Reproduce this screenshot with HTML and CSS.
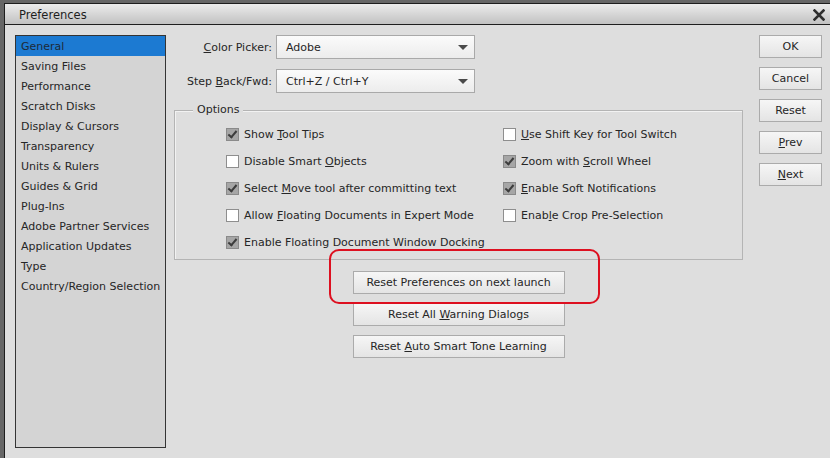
FILE: index.html
```html
<!DOCTYPE html>
<html>
<head>
<meta charset="utf-8">
<title>Preferences</title>
<link rel="stylesheet" href="styles.css">
</head>
<body>
<div class="frame">
  <div class="dialog">
    <div class="titlebar">
      <span class="title">Preferences</span>
      <svg class="close" width="12" height="12" viewBox="0 0 12 12"><path d="M1.5 1.5 L10.5 10.5 M10.5 1.5 L1.5 10.5" stroke="#2e2e2e" stroke-width="2.6" stroke-linecap="square"/></svg>
    </div>
    <div class="body">
      <ul class="cats">
        <li class="sel">General</li>
        <li>Saving Files</li>
        <li>Performance</li>
        <li>Scratch Disks</li>
        <li>Display &amp; Cursors</li>
        <li>Transparency</li>
        <li>Units &amp; Rulers</li>
        <li>Guides &amp; Grid</li>
        <li>Plug-Ins</li>
        <li>Adobe Partner Services</li>
        <li>Application Updates</li>
        <li>Type</li>
        <li>Country/Region Selection</li>
      </ul>
      <div class="main">
        <div class="fields">
          <label class="lbl"><u>C</u>olor Picker:</label>
          <div class="select"><span>Adobe</span><i class="arrow"></i></div>
          <label class="lbl">Step <u>B</u>ack/Fwd:</label>
          <div class="select"><span>Ctrl+Z / Ctrl+Y</span><i class="arrow"></i></div>
        </div>
        <div class="group">
          <span class="legend">Options</span>
          <div class="checks">
            <div class="chk"><i class="box on"></i><span>Show <u>T</u>ool Tips</span></div>
            <div class="chk"><i class="box"></i><span><u>U</u>se Shift Key for Tool Switch</span></div>
            <div class="chk"><i class="box"></i><span>Disable Smart <u>O</u>bjects</span></div>
            <div class="chk"><i class="box on"></i><span>Zoom with <u>S</u>croll Wheel</span></div>
            <div class="chk"><i class="box on"></i><span>Select <u>M</u>ove tool after committing text</span></div>
            <div class="chk"><i class="box on"></i><span><u>E</u>nable Soft Notifications</span></div>
            <div class="chk"><i class="box"></i><span>Allow <u>F</u>loating Documents in Expert Mode</span></div>
            <div class="chk"><i class="box"></i><span>Enab<u>l</u>e Crop Pre-Selection</span></div>
            <div class="chk"><i class="box on"></i><span>Enable Floating Document Window Docking</span></div>
          </div>
        </div>
        <div class="resets">
          <button class="btn wide">Reset Preferences on next launch</button>
          <button class="btn wide">Reset All <u>W</u>arning Dialogs</button>
          <button class="btn wide">Reset <u>A</u>uto Smart Tone Learning</button>
        </div>
        <div class="highlight"></div>
      </div>
      <div class="actions">
        <button class="btn side">OK</button>
        <button class="btn side">Cancel</button>
        <button class="btn side">Reset</button>
        <button class="btn side"><u>P</u>rev</button>
        <button class="btn side"><u>N</u>ext</button>
      </div>
    </div>
  </div>
</div>
</body>
</html>
```
FILE: styles.css
```css
html, body {
  margin: 0;
  padding: 0;
  width: 830px;
  height: 458px;
  overflow: hidden;
  background: #666666;
  font-family: "DejaVu Sans", sans-serif;
  font-size: 11px;
  color: #262626;
}
.frame {
  padding: 3px 0 0 4px;
  height: 455px;
}
.dialog {
  border-top: 1px solid #1e1e1e;
  border-left: 1px solid #1e1e1e;
  background: #dedede;
  height: 454px;
}
.titlebar {
  height: 20px;
  border-bottom: 1px solid #1e1e1e;
  background: linear-gradient(#ececec, #d2d2d2 60%, #c2c2c2);
  display: flex;
  align-items: center;
  justify-content: space-between;
  padding: 0 5px 0 14px;
}
.title {
  color: #1e1e1e;
  font-size: 11.5px;
  padding-top: 2px;
}
.close { display: block; margin-top: 1px; }
.body {
  display: flex;
  padding: 10px 0 0 10px;
  position: relative;
}
.cats {
  list-style: none;
  margin: 0;
  padding: 0;
  width: 149px;
  height: 411px;
  border: 1px solid #343434;
  background: #d4d4d4;
}
.cats li {
  box-sizing: border-box;
  height: 20px;
  line-height: 19px;
  padding: 1px 0 0 5px;
  white-space: nowrap;
}
.cats li.sel {
  background: #1c7ad2;
  color: #1e2a38;
}
.main {
  margin-left: 8px;
  width: 569px;
  position: relative;
}
.fields {
  display: grid;
  grid-template-columns: 98px 199px;
  column-gap: 4px;
  row-gap: 10px;
  align-items: center;
}
.lbl {
  text-align: right;
  white-space: nowrap;
}
.select {
  height: 22px;
  border: 1px solid #a9a9a9;
  background: linear-gradient(#fbfbfb, #ececec);
  display: flex;
  align-items: center;
  justify-content: space-between;
  padding: 0 6px 0 9px;
}
.arrow {
  width: 0;
  height: 0;
  border-left: 5px solid transparent;
  border-right: 5px solid transparent;
  border-top: 5px solid #4a4a4a;
  margin-top: 1px;
}
.group {
  position: relative;
  margin-top: 17px;
  height: 148px;
  border: 1px solid #b4b4b4;
  box-shadow: inset 1px 1px 0 #f2f2f2;
}
.legend {
  position: absolute;
  left: 18px;
  top: -8px;
  padding: 0 4px;
  background: #dedede;
  line-height: 14px;
}
.checks {
  display: grid;
  grid-template-columns: 277px 1fr;
  grid-auto-rows: 27px;
  padding: 10px 0 0 51px;
}
.chk {
  display: flex;
  align-items: center;
  white-space: nowrap;
}
.box {
  width: 11px;
  height: 11px;
  border: 1px solid #8e8e8e;
  background: #ffffff;
  margin-right: 5px;
  flex: none;
  position: relative;
}
.box.on {
  background: #a6a6a6;
  border-color: #8a8a8a;
}
.box.on::after {
  content: "";
  position: absolute;
  left: 3px;
  top: 0px;
  width: 3px;
  height: 7px;
  border-right: 2px solid #3c3c3c;
  border-bottom: 2px solid #3c3c3c;
  transform: rotate(40deg);
}
u { text-decoration: underline; text-underline-offset: 1px; }
.resets {
  display: flex;
  flex-direction: column;
  align-items: center;
  gap: 9px;
  margin-top: 11px;
}
.btn {
  font-family: "DejaVu Sans", sans-serif;
  font-size: 11px;
  color: #262626;
  border: 1px solid #ababab;
  background: linear-gradient(#f6f6f6, #e4e4e4);
  padding: 0;
  height: 23px;
  margin: 0;
}
.btn.wide { width: 212px; }
.highlight {
  position: absolute;
  left: 155px;
  top: 214px;
  width: 267px;
  height: 51px;
  border: 2px solid #dd1020;
  border-radius: 10px;
}
.actions {
  margin-left: 16px;
  display: flex;
  flex-direction: column;
  gap: 9px;
}
.btn.side { width: 63px; }
```
